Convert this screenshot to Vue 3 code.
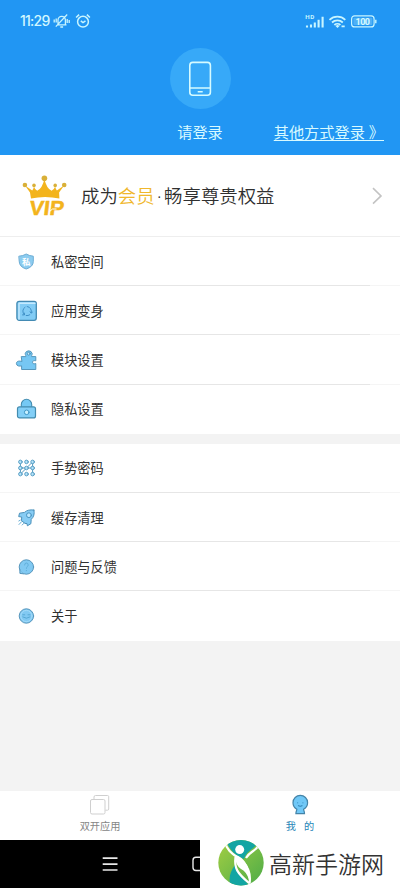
<script setup>
const groups = [
  [
    { icon: 'shield', label: '私密空间' },
    { icon: 'swap', label: '应用变身' },
    { icon: 'puzzle', label: '模块设置' },
    { icon: 'lock', label: '隐私设置' },
  ],
  [
    { icon: 'pattern', label: '手势密码' },
    { icon: 'rocket', label: '缓存清理' },
    { icon: 'help', label: '问题与反馈' },
    { icon: 'about', label: '关于' },
  ],
]
const dots = [0, 1, 2].flatMap((r) => [0, 1, 2].map((c) => ({ x: 6.4 + c * 6.1, y: 5.9 + r * 6.1 })))
</script>

<template>
  <div class="screen">
    <header class="hero">
      <div class="status">
        <span class="clock">11:29</span>
        <svg class="bell" width="17" height="16" viewBox="0 0 17 16" fill="none" stroke="#c8f5ff" stroke-width="1.3">
          <path d="M4 11.8h9.5M5 11.5V7a3.7 3.7 0 0 1 7.4 0v4.5M7.3 14h2.8M14.2 1.5 2.8 13.6M1.2 6.5v3M3.2 5.5v4M14.2 6v4M16.2 7v3" />
        </svg>
        <svg class="alarm" width="16" height="16" viewBox="0 0 16 16" fill="none" stroke="#c8f5ff" stroke-width="1.5">
          <circle cx="8" cy="8.7" r="5.4" /><path d="M5.8 7.8 8 9.6l2.5-1.8M1.1 4.5l3-2.9M14.9 4.5l-3-2.9" />
        </svg>
        <span class="grow"></span>
        <svg width="74" height="18" viewBox="0 0 74 18">
          <text x="0.3" y="7.4" font-size="6.2" font-weight="700" fill="#c8f5ff" textLength="9">HD</text>
          <path d="M2 13.6v1.8M6 12.5v2.9M9.8 10.5v4.9M13.6 7.7v7.7M17.6 4.8v10.6" stroke="#c8f5ff" stroke-width="2.1" />
          <g fill="none" stroke="#c8f5ff" stroke-width="1.8">
            <path d="M24.5 7.8a11.5 11.5 0 0 1 15.8 0M27 10.5a7.8 7.8 0 0 1 10.8 0M29.4 13a4.3 4.3 0 0 1 6 0" />
            <rect x="46.6" y="3.9" width="22.5" height="11" rx="3" stroke-width="1.2" />
          </g>
          <path d="m30.5 14 2-1.2 2 1.2-2 2zM36.5 13.6h3.2v1.7h-3.2z" fill="#c8f5ff" />
          <rect x="48.4" y="5.7" width="19" height="7.4" rx="1" fill="#4fb0f6" />
          <text x="50.5" y="12.6" font-size="9" font-weight="700" fill="#d7fbff" textLength="14.5">100</text>
          <path d="M70.8 7.7v3.5" stroke="#c8f5ff" stroke-width="1.4" />
        </svg>
      </div>
      <div class="avatar">
        <svg width="24" height="36" viewBox="0 0 24 36" fill="none" stroke="#d5fbff" stroke-width="1.6">
          <rect x="1.8" y="1.4" width="20.6" height="32.8" rx="3" /><path d="M1.8 27h20.6M9.7 30.7h5" />
        </svg>
      </div>
      <div class="login">
        <span></span>
        <span class="please">请登录</span>
        <span class="other">其他方式登录 》</span>
      </div>
    </header>

    <section class="vip">
      <svg class="crown" width="46" height="46" viewBox="0 0 46 46">
        <path d="M9 25.6 8 19.6 3 12.6l7.2 4.8q.9-.6 1.8-3.6 1 3 3.2 3.9 5-2 7.2-11.7 2.2 9.7 7.2 11.7 2.4-.9 3.5-3.9.9 3 1.8 3.6l7.2-4.8-5 7L37.4 25.6Q23 22.4 9 25.6z" fill="#f3b41c" />
        <g fill="#d9b038"><circle cx="22.4" cy="5.2" r="2.8" /><circle cx="2.9" cy="12" r="2.3" /><circle cx="12" cy="12.4" r="1.8" /><circle cx="33.2" cy="12.4" r="1.8" /><circle cx="42.2" cy="12" r="2.3" /></g>
        <text x="6.8" y="43" font-size="20.5" font-weight="700" textLength="34.5" lengthAdjust="spacingAndGlyphs" fill="#f3b41c" stroke="#f3b41c" stroke-width=".5" transform="translate(5.2 -.6) skewX(-7)">VIP</text>
        <path d="m27 39 3.5-3h4" stroke="#fff" stroke-width="1" fill="none" />
      </svg>
      <p>成为<em>会员</em><i>·</i>畅享尊贵权益</p>
      <svg class="chev" width="12" height="18" viewBox="0 0 12 18" fill="none" stroke="#c3c3c3" stroke-width="1.6"><path d="m2 1.2 8 7.7-8 7.7" /></svg>
    </section>

    <section v-for="(group, g) in groups" :key="g" class="group">
      <div v-for="item in group" :key="item.icon" class="row">
        <svg class="icon" width="24" height="24" viewBox="0 0 24 24" stroke-linejoin="round" stroke-linecap="round">
          <template v-if="item.icon === 'shield'">
            <path d="M5.2 6.2Q9 6 12.2 4q3.5 2 7.1 2.2v5.3q0 5.3-7.1 7.5-7-2.2-7-7.5z" fill="#8cccf0" stroke="#6cadd5" />
            <text x="7.9" y="14.6" font-size="8.5" font-weight="700" fill="#fff">私</text>
          </template>
          <template v-else-if="item.icon === 'swap'">
            <rect x="2.9" y="2.3" width="19.4" height="19" rx="2.2" fill="#82ccf5" stroke="#438ab3" stroke-width="1.3" />
            <path d="M5 20V4.3h16" fill="none" stroke="#c5eaff" stroke-width="1.4" />
            <path d="M10.3 15.8a4.7 4.7 0 0 1 .7-7.6M13.2 7.5a4.7 4.7 0 0 1 4 6.3M15.8 15.8a4.7 4.7 0 0 1-3.6.8M8.5 15.9h1.9v-1.8M18.4 13.2l-1.3.9-1-1.3" fill="none" stroke="#398ac2" stroke-width=".9" />
          </template>
          <template v-else-if="item.icon === 'puzzle'">
            <path d="M7.6 8.6h4.2c.5-.6-.6-1.5-.6-3a3.6 3.6 0 0 1 7 0c0 1.5-1.1 2.4-.6 3h4.2v4.2c-1-.3-3.3-.6-3.3 1.4s2.3 1.8 3.3 1.3v6H7.6v-3.7c-1.6.7-5.2.4-5.2-2.3s3.6-2.8 5.2-2.1z" fill="#76c7f3" stroke="#5697bc" />
            <circle cx="14.7" cy="5.7" r="1.4" fill="#cceeff" stroke="#4386ad" stroke-width=".8" />
          </template>
          <template v-else-if="item.icon === 'lock'">
            <path d="M7.3 10V7.5a5.2 5.2 0 0 1 10.4 0V10" fill="#75c9f4" stroke="#438caf" stroke-width="1.1" />
            <rect x="3.5" y="9.8" width="18" height="11.1" rx="2" fill="#83cff7" stroke="#438caf" stroke-width="1.2" />
            <circle cx="12.7" cy="15.3" r="2.3" fill="#c9f0ff" stroke="#4298c6" />
          </template>
          <template v-else-if="item.icon === 'pattern'">
            <path d="M6.4 5.9v12.2M18.6 18.1V5.9L6.4 18.1M6.4 12h12.2" fill="none" stroke="#438eb8" stroke-width=".9" />
            <circle v-for="(d, i) in dots" :key="i" :cx="d.x" :cy="d.y" r="1.8" fill="#b5e2f9" stroke="#4f98c0" stroke-width=".9" />
          </template>
          <template v-else-if="item.icon === 'rocket'">
            <path d="M19.9 4.1q-6-1-9.4 2.3l-5 .8-.8 3.4 3 .4-.2 3.7 3.5 2.7 2 .2.4 2.2 3.5-2.1.3-4.3q4-3.7 2.7-9.3z" fill="#87ccf4" stroke="#4c91ba" />
            <circle cx="14.9" cy="9.2" r="2.4" fill="#bce8ff" stroke="#4794c2" />
            <path d="m5 18.5 2.6-2.8M8.2 19l1.4-1.5M4.8 15l1.4-.8" stroke="#6aafd5" />
          </template>
          <template v-else>
            <circle cx="12.4" cy="12" r="7.2" fill="#81c9f2" stroke="#5796bc" />
            <path v-if="item.icon === 'help'" d="M5.9 14.6v3.8l3.6.4" fill="#81c9f2" stroke="#5796bc" />
            <path v-if="item.icon === 'help'" d="M10.6 10q0-2 1.8-2t1.8 2c0 1.6-1.8 1.5-1.8 3.4M12.4 15.4v.3" fill="none" stroke="#5dadd8" stroke-width=".9" />
            <g v-else fill="none" stroke="#4ba0cd" stroke-width=".8"><circle cx="12.4" cy="12" r="5.6" stroke="#abdefa" /><path d="M8.7 10.8h2M14 10.8h2M8.8 13q3.6 2.6 7.2 0" /></g>
          </template>
        </svg>
        <span>{{ item.label }}</span>
      </div>
    </section>

    <div class="spacer"></div>

    <nav class="tabs">
      <div class="tab">
        <svg width="22" height="22" viewBox="0 0 22 22" fill="none" stroke="#cfcfcf"><rect x="1.5" y="5.5" width="14.5" height="14.5" rx="1.5" /><path d="M5 5.2V3q0-1.5 1.5-1.5h12q1.2 0 1.2 1.2V15q0 1.2-1.2 1.2h-2.2" /></svg>
        <span>双开应用</span>
      </div>
      <div class="tab active">
        <svg width="22" height="22" viewBox="0 0 22 22"><path d="M7.8 15.2C5 13.6 4 11.2 4 8.7a7.3 7.3 0 0 1 14.6 0c0 2.5-1.2 4.9-4 6.5-.2 1 .9 1.6.9 4.5H6.9c0-2.9 1.1-3.5.9-4.5z" fill="#70c8f7" stroke="#4484a8" stroke-width="1.2" /><path d="M8.6 8.5v.8M13.9 8.5v.8M9.1 11.5q2.2 1.4 4.3 0" fill="none" stroke="#3184b4" stroke-width="1.1" /></svg>
        <span>我&nbsp;&nbsp; 的</span>
      </div>
    </nav>

    <footer class="bottom">
      <div class="system">
        <svg class="menu" width="16" height="16" viewBox="0 0 16 16" stroke="#e8e8e8" stroke-width="1.6"><path d="M.7 2.1h14.8M.7 8.1h14.8M.7 14h14.8" /></svg>
        <svg width="8" height="16" viewBox="0 0 8 16" fill="none" stroke="#e8e8e8" stroke-width="1.4"><rect x="1" y="1.3" width="14" height="13.2" rx="3" /></svg>
      </div>
      <div class="brand">
        <svg width="48" height="48" viewBox="0 0 48 48">
          <defs>
            <linearGradient id="leaf" x1="0" y1="0" x2="1" y2="1"><stop stop-color="#a5cf43" /><stop offset="1" stop-color="#49aa48" /></linearGradient>
            <clipPath id="disc"><circle cx="24" cy="22.8" r="22.7" /></clipPath>
          </defs>
          <g clip-path="url(#disc)">
            <rect width="48" height="48" fill="url(#leaf)" />
            <path d="M9 0h34C38 9 30 10 27 19 19 16 12 10 9 0z" fill="#13a5a3" />
            <path d="M18 25C13 32 11 38 14 48h19C29 39 20 35 18 25z" fill="#13a5a3" />
            <path d="M8 2c2 11 13 14 19 21 6 7 7 15 5 23M42 5c-4 7-9 6-13 13" fill="none" stroke="#fff" stroke-width="2.2" />
            <path d="M18.5 17C17 28 20 33 32 43" fill="none" stroke="#fff" stroke-width="2.2" />
            <path d="M18 15q7 1 12 10 3 6 2 15-2-8-8-11-6-4-6-14z" fill="#fff" />
            <circle cx="22.7" cy="9.6" r="4.5" fill="#fff" />
          </g>
        </svg>
        <span>高新手游网</span>
      </div>
    </footer>
  </div>
</template>

<style>
body { margin: 0; background: #f3f3f3; }
</style>

<style scoped>
.screen { display: flex; flex-direction: column; width: 400px; height: 888px; overflow: hidden; background: #f3f3f3; color: #303030; font-family: "Noto Sans", "Noto Sans CJK SC", sans-serif; }
svg { display: block; flex: none; }
.hero { display: flex; flex-direction: column; align-items: center; box-sizing: border-box; height: 155px; background: #2196f3; color: #d8faff; }
.status { display: flex; align-items: center; box-sizing: border-box; width: 100%; height: 40px; padding: 2px 21px 0 20px; }
.status svg text { font-family: Roboto, sans-serif; }
.clock { width: 33px; font: 500 14px/20px Inter, sans-serif; letter-spacing: -.75px; white-space: nowrap; color: #d1f7ff; }
.alarm { margin-left: 5px; }
.grow { flex: 1; }
.avatar { display: flex; align-items: center; justify-content: center; width: 61px; height: 61px; margin-top: 8px; border-radius: 50%; background: #37a9f8; }
.login { display: grid; grid-template-columns: 1fr auto 1fr; width: 100%; margin-top: 12px; font-size: 15.2px; line-height: 22px; white-space: nowrap; }
.other { justify-self: end; margin-right: 16px; text-decoration: underline; text-underline-offset: 2px; text-decoration-thickness: 1px; }
.vip { display: flex; align-items: center; box-sizing: border-box; height: 82px; padding: 0 17px 0 22px; background: #fff; border-bottom: 1px solid #eee; }
.crown { overflow: visible; font-family: "Liberation Sans", sans-serif; }
.vip p { flex: 1; margin: 0 0 0 13px; font-size: 18.4px; font-weight: 350; line-height: 28px; white-space: nowrap; }
.vip em { font-style: normal; color: #f0b72b; }
.vip i { display: inline-block; width: 9.5px; font-style: normal; text-align: center; }
.group { background: #fff; }
.group + .group { margin-top: 10px; }
.row { display: flex; align-items: center; gap: 13px; height: 49.2px; box-sizing: border-box; padding-left: 14px; padding-right: 31px; font-size: 13.2px; line-height: 20px; background: linear-gradient(90deg, #f5f5f5 30px, #e6e6e6 30px 370px, #f5f5f5 370px) 0 100% / 100% 1px no-repeat; }
.row:last-child { background: none; }
.spacer { flex: 1; }
.tabs { display: grid; grid-template-columns: 1fr 1fr; height: 49px; background: #fff; }
.tab { display: flex; flex-direction: column; align-items: center; gap: 2px; padding-top: 3px; font-size: 10.2px; line-height: 16px; color: #858585; }
.active { color: #2685b7; }
.bottom { display: grid; grid-template-columns: 200px 200px; height: 48px; }
.system { display: flex; align-items: center; justify-content: flex-end; gap: 74px; background: #000; }
.brand { display: flex; align-items: center; gap: 4px; padding-left: 17px; background: #fff; color: #333; font-size: 23px; font-weight: 350; line-height: 34px; white-space: nowrap; }
</style>
